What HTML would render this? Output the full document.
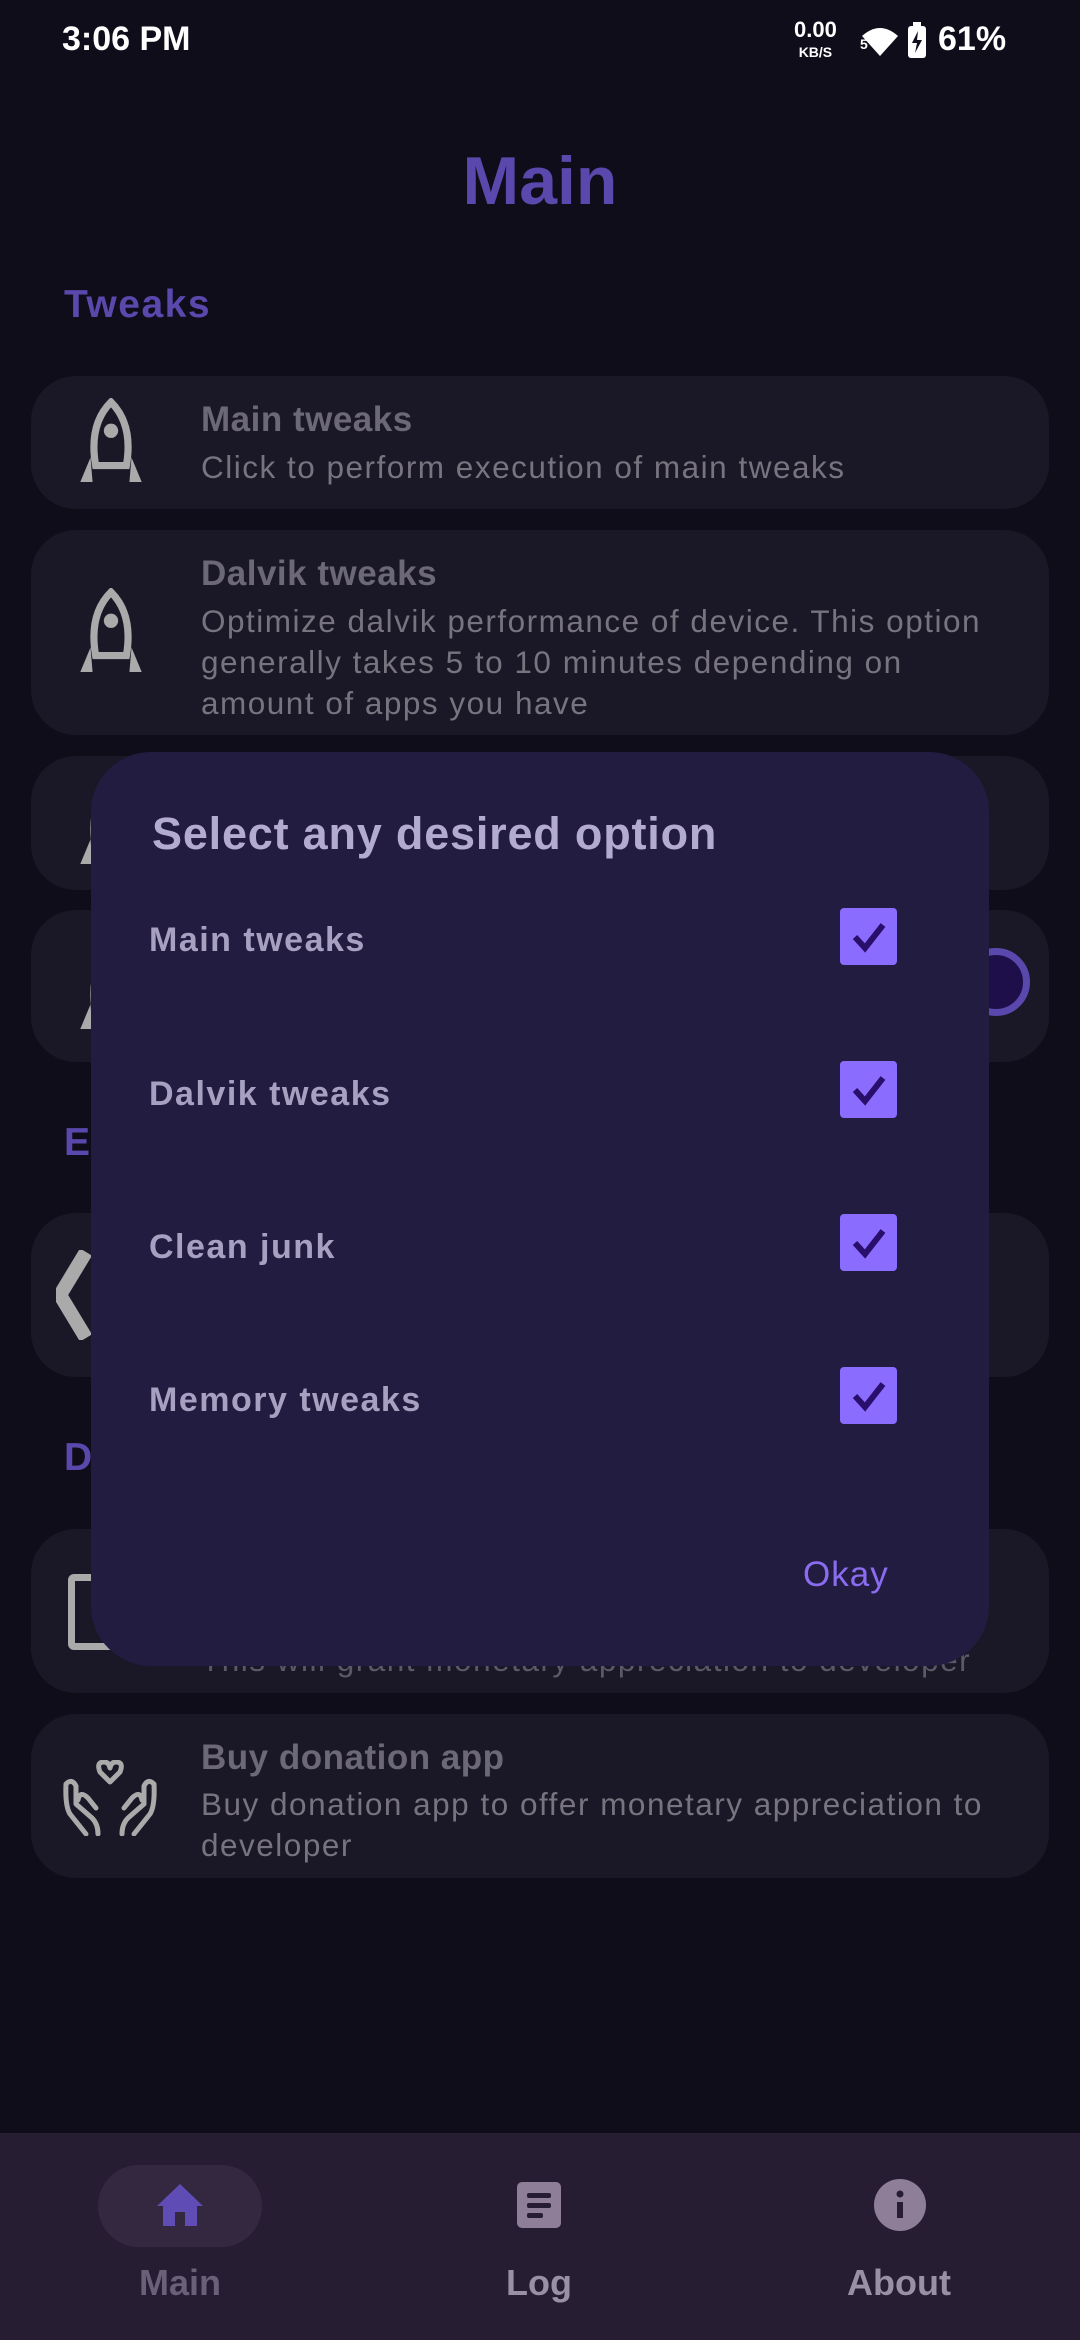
<!DOCTYPE html>
<html><head><meta charset="utf-8"><style>
*{margin:0;padding:0;box-sizing:border-box}
body{width:1080px;height:2340px;background:#100d1b;font-family:"Liberation Sans",sans-serif;position:relative;overflow:hidden}
.abs{position:absolute}
.card{position:absolute;left:31px;width:1018px;background:#1a1826;border-radius:45px}
.t{position:absolute;left:201px;color:#6c6878;font-size:35px;font-weight:bold;letter-spacing:0.5px}
.s{position:absolute;left:201px;color:#77737f;font-size:31.5px;line-height:41px;width:800px;letter-spacing:1.5px}
.sec{position:absolute;left:64px;color:#5a48ad;font-size:39px;font-weight:bold;letter-spacing:1.5px}
.opt{position:absolute;left:149px;color:#a8a0c0;font-size:34px;font-weight:bold;letter-spacing:1.5px}
.cb{position:absolute;left:840px;width:57px;height:57px;background:#8a6cff;border-radius:4px}
.nl{position:absolute;top:2262px;font-size:36px;font-weight:bold;text-align:center;width:200px}
</style></head><body>
<div class="abs" style="left:62px;top:20px;color:#fff;font-size:34px;font-weight:bold">3:06 PM</div>
<div class="abs" style="left:794px;top:20px;color:#fff;font-size:22px;font-weight:bold;line-height:20px;text-align:center">0.00<br><span style="font-size:14px">KB/S</span></div>
<div class="abs" style="left:860px;top:36px;color:#fff;font-size:14px;font-weight:bold">5</div>
<svg class="abs" style="left:860px;top:24px" width="40" height="34" viewBox="0 0 40 34"><path d="M20 32 L2 12 Q20 -4 38 12 Z" fill="#fff"/></svg>
<svg class="abs" style="left:906px;top:22px" width="22" height="38" viewBox="0 0 22 38"><rect x="2" y="4" width="18" height="32" rx="3" fill="#fff"/><rect x="7" y="0" width="8" height="5" fill="#fff"/><path d="M12 9 L6 21 H11 L9 31 L16 18 H11 Z" fill="#100d1b"/></svg>
<div class="abs" style="left:938px;top:20px;color:#fff;font-size:34px;font-weight:bold">61%</div>

<div class="abs" style="left:0;width:1080px;top:142px;text-align:center;color:#5a48ad;font-size:68px;font-weight:bold">Main</div>
<div class="sec" style="top:283px">Tweaks</div>

<svg width="0" height="0" style="position:absolute"><defs><g id="rk"><path d="M32 4 Q54 26 47 66 H17 Q10 26 32 4 Z" fill="none" stroke="#aaa" stroke-width="7"/><circle cx="32" cy="32" r="7" fill="#aaa"/><path d="M12 58 L2 82 H14 Z M52 58 L62 82 H50 Z" fill="#aaa"/></g></defs></svg>

<div class="card" style="top:376px;height:133px"></div>
<svg class="abs" style="left:78px;top:398px" width="66" height="86" viewBox="0 0 64 84"><use href="#rk"/></svg>
<div class="t" style="top:400px">Main tweaks</div>
<div class="s" style="top:447px">Click to perform execution of main tweaks</div>

<div class="card" style="top:530px;height:205px"></div>
<svg class="abs" style="left:78px;top:588px" width="66" height="86" viewBox="0 0 64 84"><use href="#rk"/></svg>
<div class="t" style="top:554px">Dalvik tweaks</div>
<div class="s" style="top:601px">Optimize dalvik performance of device. This option generally takes 5 to 10 minutes depending on amount of apps you have</div>

<div class="card" style="top:756px;height:134px"></div>
<svg class="abs" style="left:78px;top:780px" width="66" height="86" viewBox="0 0 64 84"><use href="#rk"/></svg>
<div class="card" style="top:910px;height:152px"></div>
<svg class="abs" style="left:78px;top:945px" width="66" height="86" viewBox="0 0 64 84"><use href="#rk"/></svg>
<div class="abs" style="left:962px;top:948px;width:68px;height:68px;border-radius:50%;background:#1e0f4a;border:7px solid #5a48ad"></div>

<div class="sec" style="top:1121px">Ex</div>
<div class="card" style="top:1213px;height:164px"></div>
<svg class="abs" style="left:56px;top:1250px" width="60" height="90" viewBox="0 0 60 90"><path d="M30 2 L4 45 L30 88" fill="none" stroke="#aaa" stroke-width="14"/></svg>
<div class="sec" style="top:1436px">D</div>
<div class="card" style="top:1529px;height:164px"></div>
<div class="abs" style="left:68px;top:1574px;width:60px;height:76px;border:7px solid #aaa;border-radius:6px"></div>
<div class="s" style="top:1640px;color:#5c5868;width:850px">This will grant monetary appreciation to developer</div>

<div class="card" style="top:1714px;height:164px"></div>
<svg class="abs" style="left:62px;top:1760px" width="96" height="76" viewBox="0 0 96 76"><g fill="none" stroke="#aaa" stroke-width="5" stroke-linecap="round" stroke-linejoin="round"><path d="M48 22 L38 12 Q34 2 42 2 Q47 2 48 8 Q49 2 54 2 Q62 2 58 12 Z"/><path d="M24 74 L8 54 Q3 46 4 24 Q10 18 14 26 L14 44 L30 58 Q36 64 36 74"/><path d="M16 40 Q18 30 26 38 L34 48"/><path d="M72 74 L88 54 Q93 46 92 24 Q86 18 82 26 L82 44 L66 58 Q60 64 60 74"/><path d="M80 40 Q78 30 70 38 L62 48"/></g></svg>
<div class="t" style="top:1738px">Buy donation app</div>
<div class="s" style="top:1784px">Buy donation app to offer monetary appreciation to developer</div>

<!-- dialog -->
<div class="abs" style="left:91px;top:752px;width:898px;height:914px;background:#221c40;border-radius:60px"></div>
<div class="abs" style="left:152px;top:808px;color:#b4acd0;font-size:45px;font-weight:bold;letter-spacing:0.8px">Select any desired option</div>
<div class="opt" style="top:921px">Main tweaks</div>
<div class="opt" style="top:1075px">Dalvik tweaks</div>
<div class="opt" style="top:1228px">Clean junk</div>
<div class="opt" style="top:1381px">Memory tweaks</div>
<svg width="0" height="0" style="position:absolute"><defs><path id="ck" d="M15 29 L25 40 L43 17" fill="none" stroke="#2a0e6b" stroke-width="6"/></defs></svg>
<div class="cb" style="top:908px"><svg width="57" height="57"><use href="#ck"/></svg></div>
<div class="cb" style="top:1061px"><svg width="57" height="57"><use href="#ck"/></svg></div>
<div class="cb" style="top:1214px"><svg width="57" height="57"><use href="#ck"/></svg></div>
<div class="cb" style="top:1367px"><svg width="57" height="57"><use href="#ck"/></svg></div>
<div class="abs" style="left:803px;top:1555px;color:#8a6cf0;font-size:35px;letter-spacing:1px">Okay</div>

<!-- nav -->
<div class="abs" style="left:0;top:2133px;width:1080px;height:207px;background:#271d33"></div>
<div class="abs" style="left:98px;top:2165px;width:164px;height:82px;border-radius:41px;background:#332840"></div>
<svg class="abs" style="left:155px;top:2182px" width="50" height="46" viewBox="0 0 50 46"><path d="M25 2 L48 24 H42 V44 H30 V30 H20 V44 H8 V24 H2 Z" fill="#5f4db5"/></svg>
<svg class="abs" style="left:515px;top:2180px" width="48" height="50" viewBox="0 0 48 50"><rect x="2" y="2" width="44" height="46" rx="5" fill="#8e7e98"/><rect x="12" y="13" width="24" height="5" rx="2" fill="#271d33"/><rect x="12" y="23" width="24" height="5" rx="2" fill="#271d33"/><rect x="12" y="33" width="16" height="5" rx="2" fill="#271d33"/></svg>
<svg class="abs" style="left:873px;top:2178px" width="54" height="54" viewBox="0 0 54 54"><circle cx="27" cy="27" r="26" fill="#8e7e98"/><rect x="24" y="24" width="6" height="16" fill="#271d33"/><circle cx="27" cy="16" r="3.5" fill="#271d33"/></svg>
<div class="nl" style="left:80px;color:#6a6078">Main</div>
<div class="nl" style="left:439px;color:#9a90a6">Log</div>
<div class="nl" style="left:799px;color:#9a90a6">About</div>
</body></html>
